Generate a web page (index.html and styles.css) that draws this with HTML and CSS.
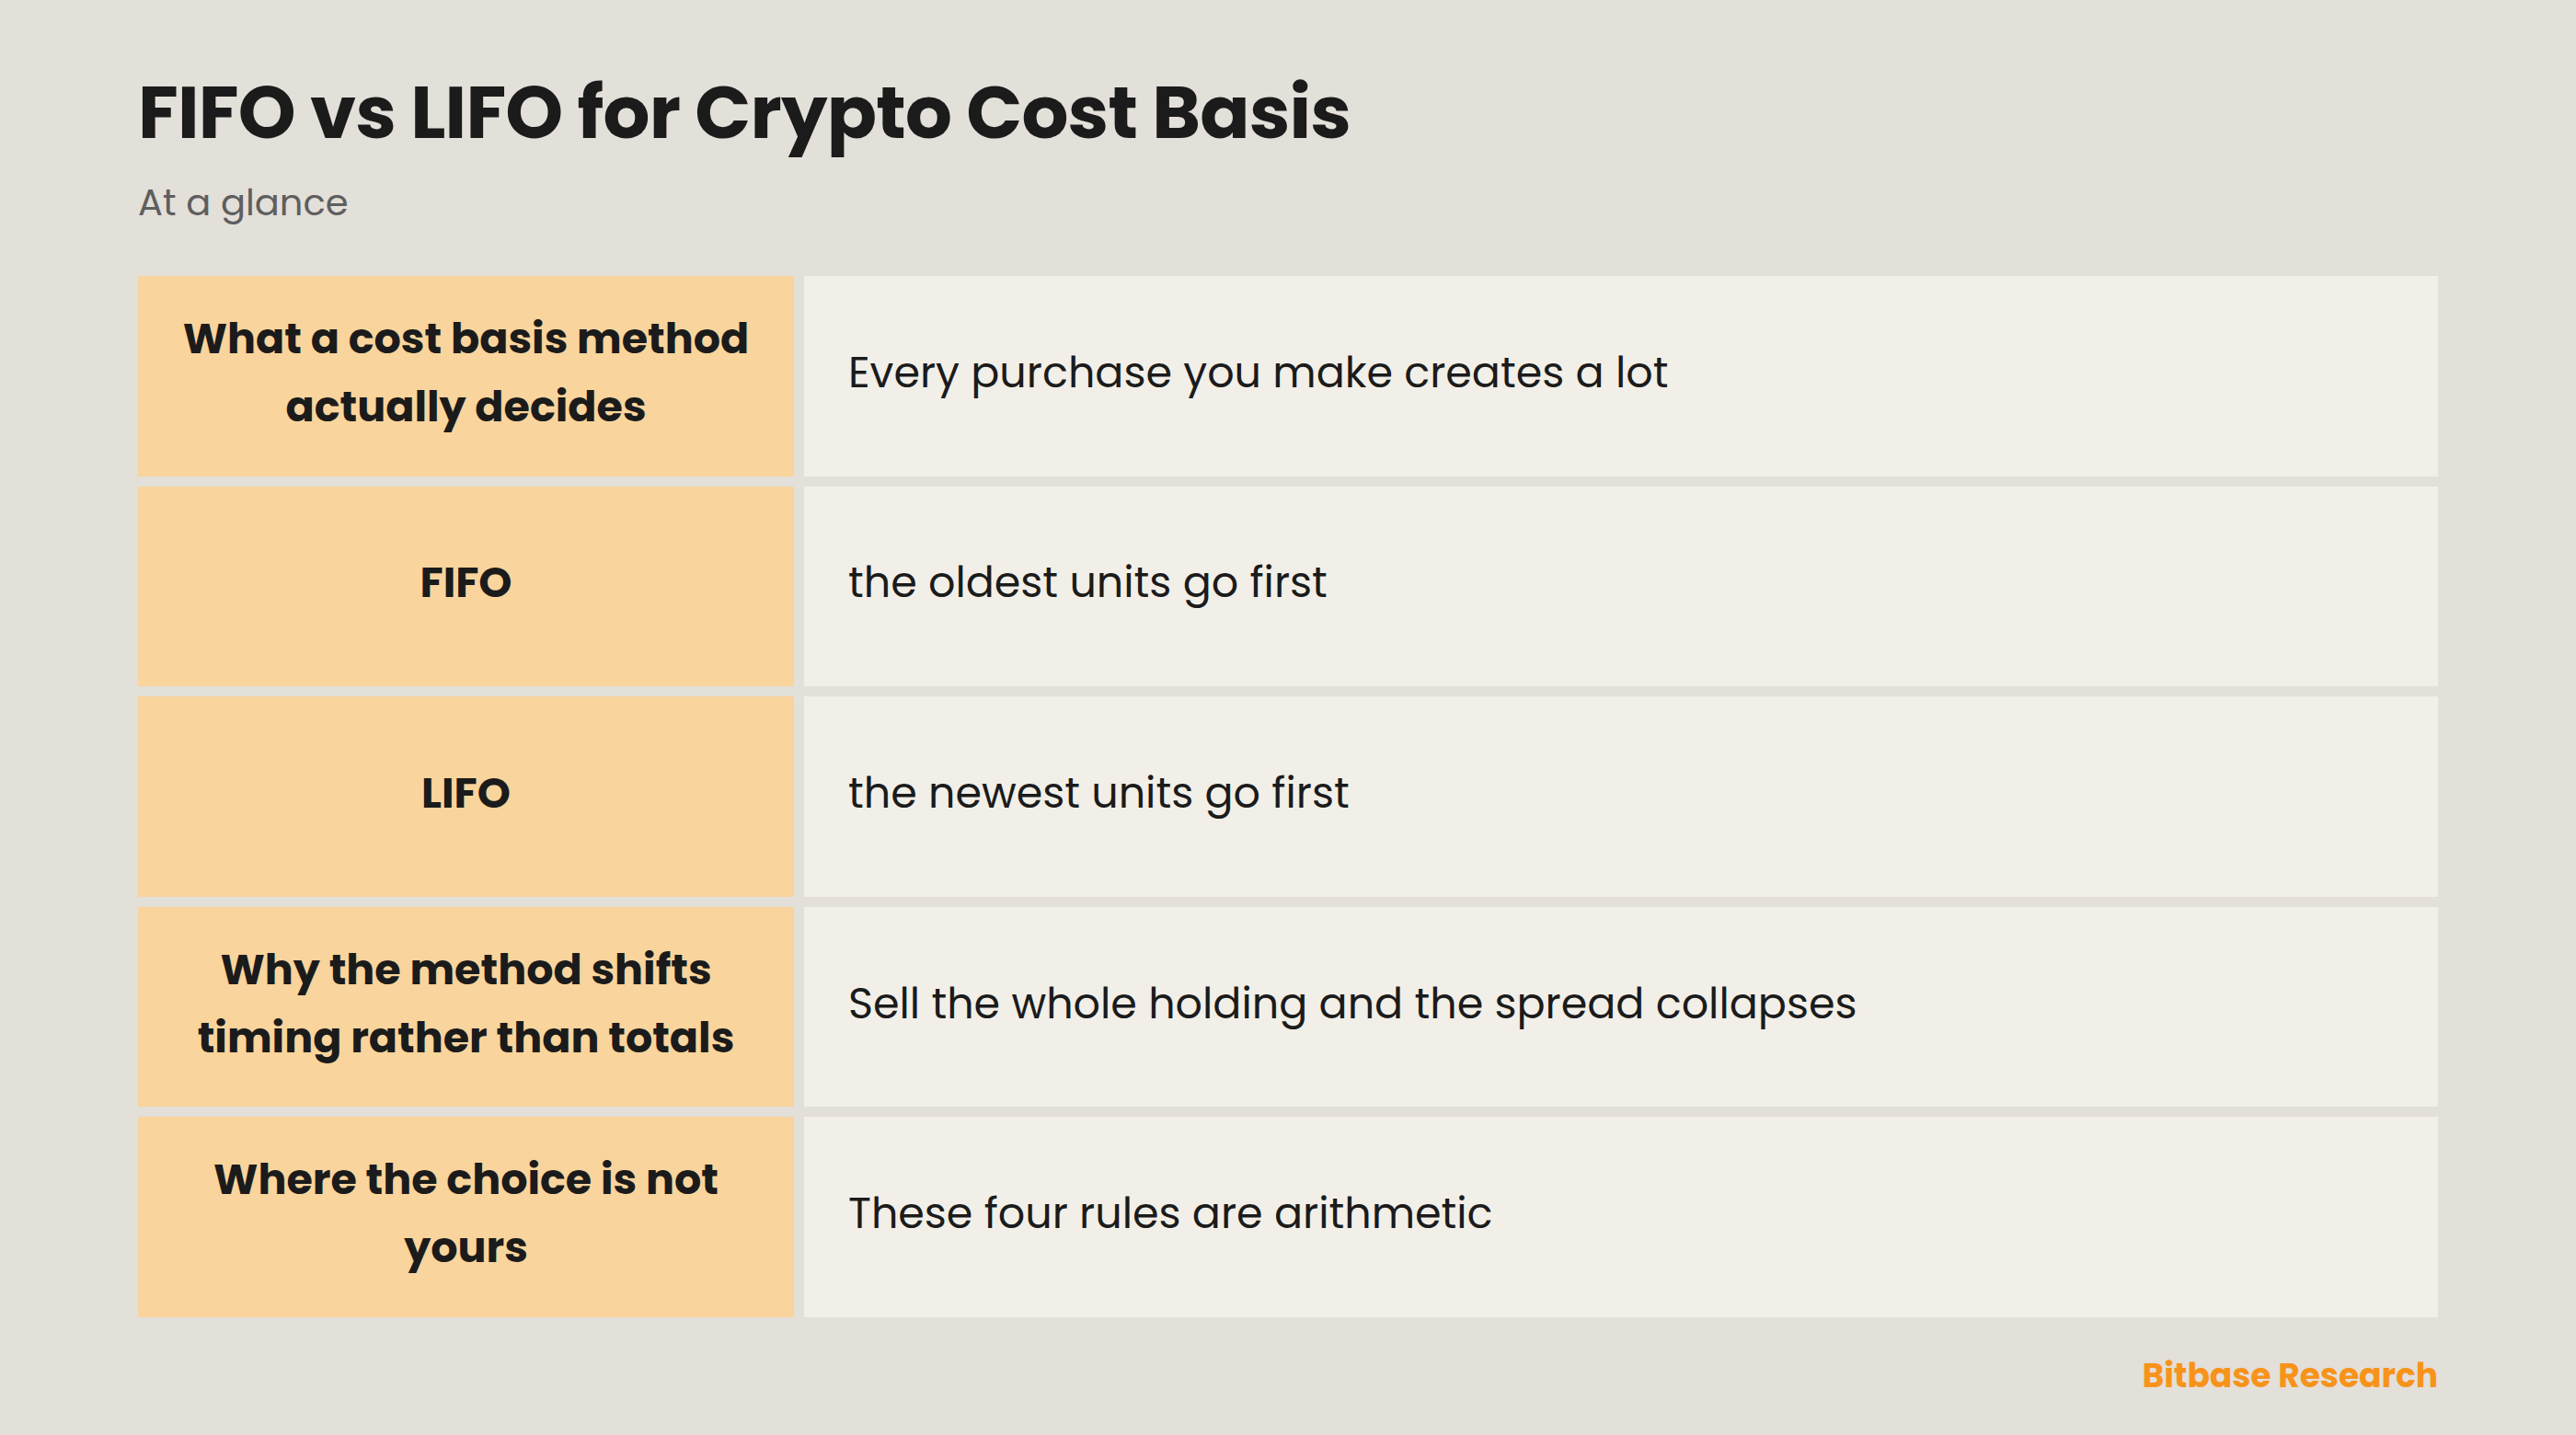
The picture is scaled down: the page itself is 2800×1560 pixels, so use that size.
FILE: index.html
```html
<!DOCTYPE html>
<html lang="en">
<head>
<meta charset="utf-8">
<title>FIFO vs LIFO for Crypto Cost Basis</title>
<link rel="stylesheet" href="styles.css">
</head>
<body>
<main class="page">
  <header class="header">
    <h1 class="title">FIFO vs LIFO for Crypto Cost Basis</h1>
    <p class="subtitle">At a glance</p>
  </header>
  <section class="table">
    <div class="label">What a cost basis method actually decides</div>
    <div class="value">Every purchase you make creates a lot</div>
    <div class="label">FIFO</div>
    <div class="value">the oldest units go first</div>
    <div class="label">LIFO</div>
    <div class="value">the newest units go first</div>
    <div class="label">Why the method shifts timing rather than totals</div>
    <div class="value">Sell the whole holding and the spread collapses</div>
    <div class="label">Where the choice is not yours</div>
    <div class="value">These four rules are arithmetic</div>
  </section>
  <footer class="footer">Bitbase Research</footer>
</main>
</body>
</html>
```
FILE: styles.css
```css
html, body {
  margin: 0;
  padding: 0;
  background: #E3DFD9;
}
body {
  font-family: "Poppins", "Inter", "Noto Sans", sans-serif;
  color: #1B1B1B;
}
.page {
  width: 2800px;
  height: 1560px;
  box-sizing: border-box;
  padding: 74px 150px 0;
  display: flex;
  flex-direction: column;
}
.title {
  margin: 0;
  font-size: 80px;
  line-height: 96px;
  font-weight: 700;
  letter-spacing: -0.8px;
}
.subtitle {
  margin: 26px 0 0;
  font-size: 40px;
  line-height: 48px;
  font-weight: 400;
  color: #5E5E5E;
}
.table {
  margin-top: 56px;
  display: grid;
  grid-template-columns: 713px 1fr;
  grid-auto-rows: 217.6px;
  gap: 11px;
}
.label {
  background: #F9D49C;
  display: flex;
  align-items: center;
  justify-content: center;
  text-align: center;
  padding: 0 44px 8px;
  font-size: 46px;
  line-height: 74px;
  font-weight: 700;
}
.value {
  background: #F2EFE8;
  display: flex;
  align-items: center;
  padding: 0 48px 8px;
  font-size: 46px;
  line-height: 74px;
  font-weight: 400;
}
.footer {
  margin-top: 42px;
  text-align: right;
  font-size: 36px;
  line-height: 44px;
  font-weight: 700;
  color: #F7931A;
}
```
